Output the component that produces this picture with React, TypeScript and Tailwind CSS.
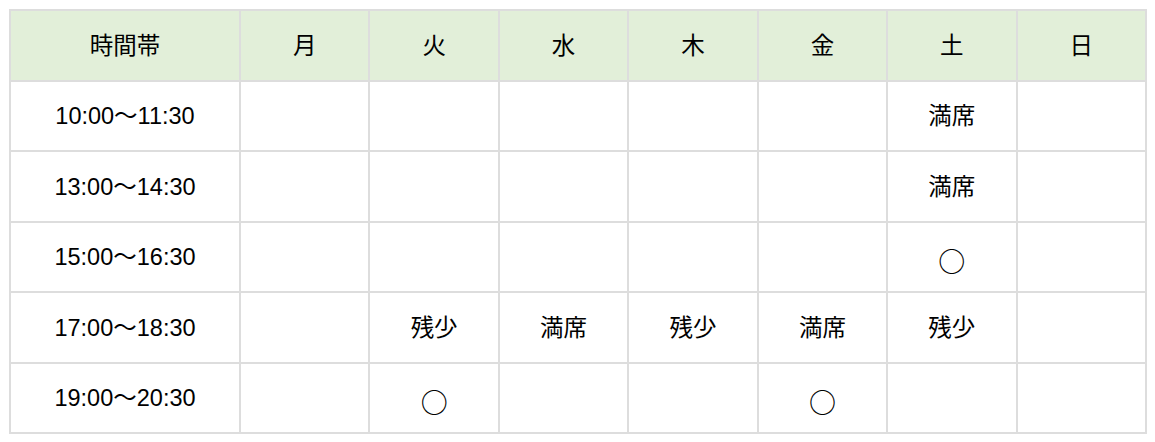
const days = ["月", "火", "水", "木", "金", "土", "日"];

const rows: { time: string; cells: string[] }[] = [
  { time: "10:00～11:30", cells: ["", "", "", "", "", "満席", ""] },
  { time: "13:00～14:30", cells: ["", "", "", "", "", "満席", ""] },
  { time: "15:00～16:30", cells: ["", "", "", "", "", "○", ""] },
  { time: "17:00～18:30", cells: ["", "残少", "満席", "残少", "満席", "残少", ""] },
  { time: "19:00～20:30", cells: ["", "○", "", "", "○", "", ""] },
];

function Cell({ value }: { value: string }) {
  if (value === "○") {
    return (
      <span className="inline-block translate-y-[7px] font-['Noto_Sans_CJK_JP'] text-[27px] font-medium leading-none">
        ○
      </span>
    );
  }
  return <span>{value}</span>;
}

export default function App() {
  return (
    <div
      className="min-h-[442px] bg-white p-[9px] text-black"
      style={{ fontFamily: '"Liberation Sans", Arial, "Noto Sans CJK JP", sans-serif' }}
    >
      <table className="w-[1138px] table-fixed border-collapse text-center text-[23.5px]">
        <colgroup>
          <col className="w-[230px]" />
          {days.map((d) => (
            <col key={d} />
          ))}
        </colgroup>
        <thead>
          <tr className="h-[70.5px] bg-[#e2efd9]">
            <th className="border-2 border-[#dddddd] pt-[2px] font-normal">時間帯</th>
            {days.map((d) => (
              <th key={d} className="border-2 border-[#dddddd] pt-[2px] font-normal">
                {d}
              </th>
            ))}
          </tr>
        </thead>
        <tbody>
          {rows.map((r) => (
            <tr key={r.time} className="h-[70.5px]">
              <td className="border-2 border-[#dddddd] pt-[2px]">{r.time}</td>
              {r.cells.map((c, i) => (
                <td key={i} className="border-2 border-[#dddddd] pt-[2px]">
                  <Cell value={c} />
                </td>
              ))}
            </tr>
          ))}
        </tbody>
      </table>
    </div>
  );
}
